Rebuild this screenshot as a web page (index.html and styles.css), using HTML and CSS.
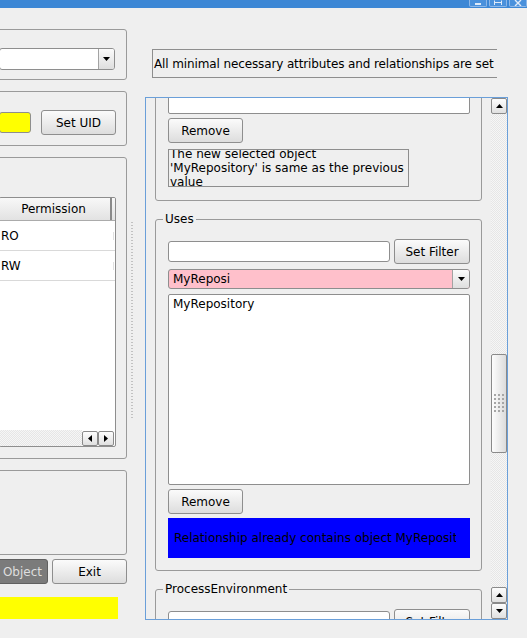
FILE: index.html
```html
<!DOCTYPE html>
<html>
<head>
<meta charset="utf-8">
<title>Object editor</title>
<link rel="stylesheet" href="styles.css">
</head>
<body>
<div class="titlebar">
  <div class="tb-buttons">
    <span class="tb-btn"><svg width="16" height="6" viewBox="0 0 16 6"><rect x="5" y="3" width="6" height="2" fill="#dfeaf8"/></svg></span>
    <span class="tb-btn"><svg width="16" height="6" viewBox="0 0 16 6"><path d="M4.5 0.5 V5 M11.5 0.5 V5 M4.5 2.5 H11.5" stroke="#dfeaf8" fill="none"/></svg></span>
    <span class="tb-btn"><svg width="16" height="6" viewBox="0 0 16 6"><path d="M5 0 L8 3 L11 0 M5 6 L8 3 L11 6" stroke="#dfeaf8" stroke-width="1.4" fill="none"/></svg></span>
  </div>
</div>
<div class="main">
  <div class="left">
    <div class="panel p1">
      <div class="combo">
        <span class="combo-text"></span>
        <span class="combo-arrow"><svg width="7" height="4" viewBox="0 0 7 4"><polygon points="0,0 7,0 3.5,4" fill="#000"/></svg></span>
      </div>
    </div>
    <div class="panel p2">
      <div class="field yellow-field"></div>
      <div class="btn uid-btn">Set UID</div>
    </div>
    <div class="panel p3">
      <div class="table">
        <div class="thead">
          <div class="th">Permission</div>
          <div class="th-sep"></div>
          <div class="th-rest"></div>
        </div>
        <div class="tr">RO<span class="tr-mark"></span></div>
        <div class="tr">RW<span class="tr-mark"></span></div>
        <div class="tfill"></div>
        <div class="hscroll">
          <div class="track"></div>
          <div class="sb-btn"><svg width="4" height="7" viewBox="0 0 4 7"><polygon points="4,0 4,7 0,3.5" fill="#000"/></svg></div>
          <div class="sb-btn"><svg width="4" height="7" viewBox="0 0 4 7"><polygon points="0,0 0,7 4,3.5" fill="#000"/></svg></div>
        </div>
      </div>
    </div>
    <div class="panel p4"></div>
    <div class="btn-row">
      <div class="btn dark-btn">Object</div>
      <div class="btn exit-btn">Exit</div>
    </div>
    <div class="yellow-bar"></div>
  </div>

  <div class="splitter"><div class="grip"></div></div>

  <div class="right">
    <div class="status">All minimal necessary attributes and relationships are set</div>
    <div class="scrollarea">
      <div class="viewport">
        <div class="group g1">
          <div class="field list list-small"></div>
          <div class="btn remove-btn">Remove</div>
          <div class="msg">
            <div class="msg-line">The new selected object</div>
            <div class="msg-line">'MyRepository' is same as the previous</div>
            <div class="msg-line">value</div>
          </div>
        </div>

        <fieldset class="group">
          <legend>Uses</legend>
          <div class="filter-row">
            <div class="field filter-field"></div>
            <div class="btn filter-btn">Set Filter</div>
          </div>
          <div class="combo pink">
            <span class="combo-text">MyReposi</span>
            <span class="combo-arrow"><svg width="7" height="4" viewBox="0 0 7 4"><polygon points="0,0 7,0 3.5,4" fill="#000"/></svg></span>
          </div>
          <div class="field list list-big"><div class="list-item">MyRepository</div></div>
          <div class="btn remove-btn">Remove</div>
          <div class="blue-msg"><span class="blue-text">Relationship already contains object MyRepository</span></div>
        </fieldset>

        <fieldset class="group">
          <legend>ProcessEnvironment</legend>
          <div class="filter-row">
            <div class="field filter-field"></div>
            <div class="btn filter-btn">Set Filter</div>
          </div>
        </fieldset>
      </div>
      <div class="vscroll">
        <div class="sb-btn"><svg width="7" height="4" viewBox="0 0 7 4"><polygon points="0,4 7,4 3.5,0" fill="#000"/></svg></div>
        <div class="vtrack">
          <div class="handle">
            <svg width="11" height="19" viewBox="0 0 11 19">
              <defs><pattern id="dots" width="4" height="4" patternUnits="userSpaceOnUse"><rect width="2" height="2" fill="#a6a6a6"/></pattern></defs>
              <rect width="11" height="19" fill="url(#dots)"/>
            </svg>
          </div>
        </div>
        <div class="sb-btn"><svg width="7" height="4" viewBox="0 0 7 4"><polygon points="0,4 7,4 3.5,0" fill="#000"/></svg></div>
        <div class="sb-btn"><svg width="7" height="4" viewBox="0 0 7 4"><polygon points="0,0 7,0 3.5,4" fill="#000"/></svg></div>
      </div>
    </div>
  </div>
</div>
</body>
</html>
```
FILE: styles.css
```css
* { box-sizing: border-box; }
html, body { margin: 0; padding: 0; }
body {
  background: #efefef;
  font-family: "DejaVu Sans", "Noto Sans", sans-serif;
  font-size: 12px;
  color: #000;
  width: 527px;
  height: 638px;
  overflow: hidden;
}

/* title bar */
.titlebar {
  height: 8px;
  background: #3c87d5;
  display: flex;
  justify-content: flex-end;
}
.tb-buttons { display: flex; gap: 2px; }
.tb-btn {
  width: 18px;
  height: 7px;
  border: 1px solid #8db7e8;
  border-top: none;
  border-radius: 0 0 2px 2px;
  background: #4a91dc;
  display: flex;
  align-items: flex-start;
  justify-content: center;
}
.tb-btn svg { display: block; }

.main { display: flex; }

/* generic widgets */
.panel { border: 1px solid #9a9a9a; border-radius: 3px; }
.btn {
  display: flex;
  align-items: center;
  justify-content: center;
  height: 25px;
  border: 1px solid #8e8e8e;
  border-radius: 3px;
  background: linear-gradient(#fbfbfb, #dddddd);
  white-space: nowrap;
}
.field {
  background: #fff;
  border: 1px solid #8e8e8e;
  border-radius: 3px;
}
.combo {
  display: flex;
  height: 22px;
  background: #fff;
  border: 1px solid #8e8e8e;
  border-radius: 3px;
  overflow: hidden;
}
.combo-text { flex: 1; padding-left: 4px; line-height: 18px; }
.combo-arrow {
  width: 16px;
  border-left: 1px solid #a3a3a3;
  background: linear-gradient(#fbfbfb, #dedede);
  display: flex;
  align-items: center;
  justify-content: center;
}
.combo-arrow svg, .sb-btn svg { display: block; }

/* left column */
.left {
  width: 139px;
  margin-left: -12px;
  padding-top: 21px;
  display: flex;
  flex-direction: column;
  flex: none;
}
.p1 { height: 51px; padding: 18px 0 0 10px; }
.p1 .combo { width: 116px; }

.p2 {
  margin-top: 11px;
  height: 55px;
  padding: 18px 0 0 10px;
  display: flex;
  align-items: flex-start;
}
.yellow-field { width: 32px; height: 21px; margin-top: 2px; background: #ffff00; }
.uid-btn { width: 75px; margin-left: 10px; }

.p3 { margin-top: 11px; height: 302px; padding: 39px 0 0 10px; }
.table {
  width: 117px;
  height: 250px;
  border: 1px solid #8e8e8e;
  border-radius: 2px;
  background: #fff;
  display: flex;
  flex-direction: column;
  overflow: hidden;
}
.thead {
  height: 23px;
  display: flex;
  border-bottom: 1px solid #ababab;
  background: linear-gradient(#f8f8f8, #e2e2e2);
  flex: none;
}
.th { width: 110px; padding-right: 3px; display: flex; align-items: center; justify-content: center; }
.th-sep { width: 2px; background: #8a8a8a; }
.th-rest { flex: 1; }
.tr {
  height: 30px;
  flex: none;
  border-bottom: 1px solid #d9d9d9;
  padding-left: 1px;
  line-height: 30px;
  position: relative;
}
.tr-mark {
  position: absolute;
  right: 1px;
  top: 11px;
  width: 1px;
  height: 8px;
  background: #e0e0e0;
}
.tfill { flex: 1; }
.hscroll { height: 16px; display: flex; align-items: flex-end; flex: none; padding-right: 1px; }
.track, .vtrack {
  background-color: #f6f6f6;
  background-image: repeating-conic-gradient(#e6e6e6 0 25%, transparent 0 50%);
  background-size: 2px 2px;
}
.hscroll .track { flex: 1; align-self: stretch; }
.sb-btn {
  width: 16px;
  height: 16px;
  flex: none;
  border: 1px solid #8a8a8a;
  border-radius: 2px;
  background: linear-gradient(#fdfdfd, #e0e0e0);
  display: flex;
  align-items: center;
  justify-content: center;
}
.hscroll .sb-btn { height: 15px; }

.p4 { margin-top: 11px; height: 85px; }
.btn-row { margin-top: 4px; display: flex; gap: 4px; }
.dark-btn {
  width: 60px;
  background: #7b7b7b;
  border-color: #606060;
  color: #dedede;
  justify-content: flex-end;
  padding-right: 5px;
}
.exit-btn { width: 75px; }
.yellow-bar { margin-top: 13px; width: 130px; height: 22px; background: #ffff00; }

/* splitter */
.splitter { width: 18px; flex: none; }
.grip {
  margin: 214px 0 0 4px;
  width: 2px;
  height: 198px;
  background: repeating-linear-gradient(#c2c2c2 0 1px, transparent 1px 3px);
}

/* right column */
.right { flex: 1; }
.status {
  margin: 41px 0 0 7px;
  width: 345px;
  height: 29px;
  border: 1px solid #8e8e8e;
  border-right: none;
  padding-left: 1px;
  line-height: 28px;
  letter-spacing: -0.12px;
  white-space: nowrap;
  overflow: hidden;
}
.scrollarea {
  margin-top: 19px;
  width: 363px;
  height: 523px;
  border: 1px solid #6a9fd9;
  display: flex;
}
.viewport { flex: 1; overflow: hidden; padding: 0 9px; }

.group {
  border: 1px solid #9a9a9a;
  border-radius: 3px;
  padding: 12px 11px 13px 12px;
}
.g1 { margin-top: -37px; }
fieldset.group {
  margin: 11px 0 0;
  padding: 13px 11px 12px 12px;
  min-width: 0;
}
legend {
  padding: 0 2px;
  margin-left: -5px;
  line-height: 14px;
}
.list { border-radius: 2px; }
.list-small { height: 40px; }
.remove-btn { width: 75px; margin-top: 4px; }
.msg {
  margin-top: 6px;
  width: 241px;
  height: 38px;
  border: 1px solid #8e8e8e;
  overflow: hidden;
  display: flex;
  flex-direction: column;
  justify-content: center;
  padding-left: 1px;
}
.msg-line { line-height: 14px; white-space: nowrap; flex: none; }

.filter-row { display: flex; align-items: flex-start; gap: 4px; }
.filter-field { width: 222px; height: 21px; margin-top: 2px; }
.filter-btn { width: 76px; }
.combo.pink { margin-top: 5px; height: 20px; background: #ffc0cb; }
.combo.pink .combo-arrow { width: 17px; }
.list-big { margin-top: 5px; height: 191px; padding: 2px 4px; }
.list-item { line-height: 14px; }
.blue-msg {
  margin-top: 4px;
  height: 40px;
  background: #0000ff;
  display: flex;
  align-items: center;
  padding-left: 6px;
}
.blue-text { width: 282px; overflow: hidden; white-space: nowrap; }

.vscroll { width: 16px; display: flex; flex-direction: column; flex: none; }
.vtrack { flex: 1; padding-top: 240px; }
.handle {
  height: 99px;
  border: 1px solid #8a8a8a;
  border-radius: 2px;
  background: linear-gradient(to right, #fdfdfd, #dcdcdc);
  display: flex;
  align-items: center;
  justify-content: center;
}
.handle svg { display: block; }
```
